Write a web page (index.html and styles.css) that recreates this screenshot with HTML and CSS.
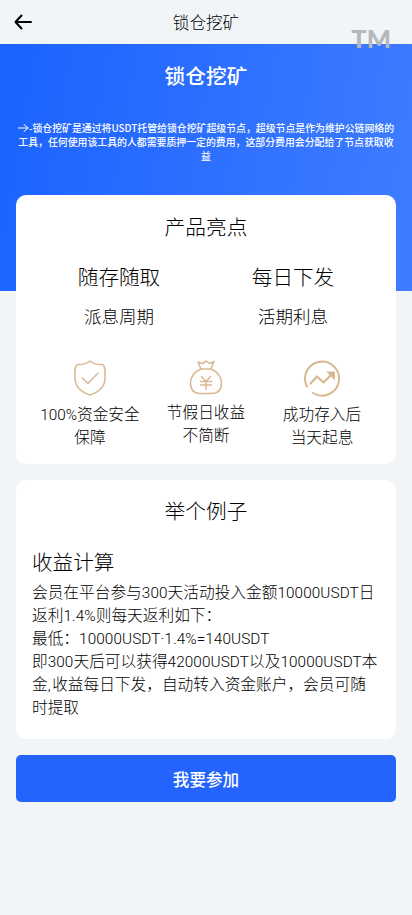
FILE: index.html
```html
<!DOCTYPE html>
<html lang="zh-CN">
<head>
<meta charset="utf-8">
<meta name="viewport" content="width=device-width, initial-scale=1">
<title>锁仓挖矿</title>
<link rel="stylesheet" href="styles.css">
</head>
<body>
<header class="nav">
  <svg class="back" viewBox="0 0 18 16" width="18" height="16"><path d="M7.500 1.500 1.500 8l6 6.500M1.500 8H17"/></svg>
  <h1 class="nav-title">锁仓挖矿</h1>
  <span class="mark">TM</span>
</header>
<section class="hero">
  <h2 class="hero-title">锁仓挖矿</h2>
  <p class="desc">
    <span class="line"><svg class="arrow" viewBox="0 0 11 8" width="11" height="8"><path d="M0 4h10M6 .5 10 4 6 7.500"/></svg>-锁仓挖矿是通过将USDT托管给锁仓挖矿超级节点，超级节点是作为维护公链网络的</span>
    <span class="line">工具，任何使用该工具的人都需要质押一定的费用，这部分费用会分配给了节点获取收</span>
    <span class="line">益</span>
  </p>
</section>
<main class="content">
  <section class="card highlights">
    <h2 class="card-title">产品亮点</h2>
    <div class="stats">
      <div class="stat"><strong class="stat-main">随存随取</strong><span class="stat-sub">派息周期</span></div>
      <div class="stat"><strong class="stat-main">每日下发</strong><span class="stat-sub">活期利息</span></div>
    </div>
    <div class="features">
      <div class="feature">
        <svg class="icon" viewBox="0 0 38 38" width="38" height="38"><path d="M19 2C15.500 4.800 11 6 6.200 5.500 4.500 7 4 9 4 12v7c0 9 6 14 15 17 9-3 15-8 15-17v-7c0-3-.5-5-2.200-6.500C27 6 22.500 4.800 19 2Z"/><path d="m11.500 19 5.500 5.500L27 14"/></svg>
        <p class="label"><span class="latin">100%</span>资金安全<br>保障</p>
      </div>
      <div class="feature middle">
        <svg class="icon" viewBox="0 0 38 38" width="38" height="38"><path d="M14 10 11 3 15.500 4.500 19.500 2 22.500 4.500 27 2.500 24 10C31 13 34.500 18 34.500 24c0 7-4 10.500-10 10.500h-11C7.500 34.500 3.500 31 3.500 24c0-6 3.500-11 10.500-14ZM14 10h10M14.500 17.500l4.500 5 4.500-5M19 22.500v8M13.500 22.500h11M13.500 26h11"/></svg>
        <p class="label">节假日收益<br>不简断</p>
      </div>
      <div class="feature">
        <svg class="icon trend" viewBox="0 0 38 38" width="38" height="38"><path d="M4 27.500A17 17 0 1 1 10 34"/><path class="trend-line" d="m7.500 24.500 6.500-7 6.500 6L28 16"/><path class="tip" d="m23 12.500h9v9Z"/></svg>
        <p class="label">成功存入后<br>当天起息</p>
      </div>
    </div>
  </section>
  <section class="card example">
    <h2 class="card-title">举个例子</h2>
    <h3 class="sub-title">收益计算</h3>
    <p class="body">
      <span class="line">会员在平台参与<span class="latin">300</span>天活动投入金额<span class="latin">10000USDT</span>日</span>
      <span class="line">返利<span class="latin">1.4%</span>则每天返利如下：</span>
      <span class="line">最低：<span class="latin">10000USDT·1.4%=140USDT</span></span>
      <span class="line">即<span class="latin">300</span>天后可以获得<span class="latin">42000USDT</span>以及<span class="latin">10000USDT</span>本</span>
      <span class="line">金<span class="latin comma">,</span>收益每日下发，自动转入资金账户，会员可随</span>
      <span class="line">时提取</span>
    </p>
  </section>
  <button class="join" type="button">我要参加</button>
</main>
</body>
</html>
```
FILE: styles.css
```css
* { box-sizing: border-box; }
body {
  margin: 0;
  min-height: 915px;
  background: #f1f5f7;
  color: #000;
  font-family: "Noto Sans CJK SC", sans-serif;
  font-weight: 300;
}
h1, h2, h3, p { margin: 0; font-weight: 300; }
svg { fill: none; stroke-linecap: round; stroke-linejoin: round; }
.line { display: block; white-space: nowrap; }
.latin { font-family: Roboto, sans-serif; font-size: 15.3px; line-height: 1; }
.nav {
  position: relative;
  height: 44px;
  display: flex;
  align-items: center;
  justify-content: center;
}
.back { position: absolute; left: 14px; top: 14px; stroke: #000; stroke-width: 2; }
.nav-title { font-size: 16.6px; line-height: 24px; }
.mark {
  position: absolute;
  right: 21px;
  top: 23px;
  z-index: 1;
  font: 900 25.5px/30px Lato, sans-serif;
  color: #b5b8bb;
}
.hero {
  height: 247px;
  padding-top: 16px;
  background: linear-gradient(100deg, #1b62ff, #3f7dff);
  color: #fff;
  text-align: center;
}
.hero-title { font-size: 20.7px; line-height: 30px; font-weight: 500; }
.desc { margin-top: 31px; font-size: 9.88px; line-height: 14px; font-weight: 500; }
.desc .line { display: flex; justify-content: center; align-items: center; }
.arrow { stroke: #fff; stroke-width: 1; }
.content { position: relative; margin-top: -96px; padding: 0 16px; }
.card { background: #fff; border-radius: 10px; }
.card-title { text-align: center; font-size: 20.7px; line-height: 30px; }
.highlights { height: 269px; padding-top: 16px; }
.stats { display: grid; grid-template-columns: 1fr 1fr; padding: 0 16px; margin-top: 20px; text-align: center; }
.stat { display: flex; flex-direction: column; }
.stat-main { font-size: 20.6px; line-height: 30px; font-weight: 300; }
.stat-sub { font-size: 17.5px; line-height: 26px; margin-top: 12px; }
.features { display: grid; grid-template-columns: repeat(3, 1fr); padding: 0 16px; margin-top: 30px; text-align: center; }
.feature { display: flex; flex-direction: column; align-items: center; }
.icon { stroke: #d9b994; stroke-width: 1.5; }
.trend { stroke-width: 2; }
.trend .trend-line { stroke-width: 2.200; }
.trend .tip { fill: #d9b994; stroke: none; }
.label { font-size: 15.7px; line-height: 23px; margin-top: 5px; white-space: nowrap; }
.middle .label { margin-top: 3px; }
.example { height: 259px; margin-top: 16px; padding: 15px 16px 0; }
.sub-title { font-size: 20.6px; line-height: 30px; margin-top: 21px; }
.body { margin-top: 4px; font-size: 15.7px; line-height: 23px; }
.body .latin { letter-spacing: .1px; }
.body .comma { letter-spacing: 1.5px; }
.join {
  display: block;
  width: 100%;
  height: 47px;
  margin-top: 16px;
  padding: 0;
  border: 0;
  border-radius: 5px;
  background: #2563ff;
  color: #fff;
  font: 500 16.6px/24px "Noto Sans CJK SC", sans-serif;
}
```
